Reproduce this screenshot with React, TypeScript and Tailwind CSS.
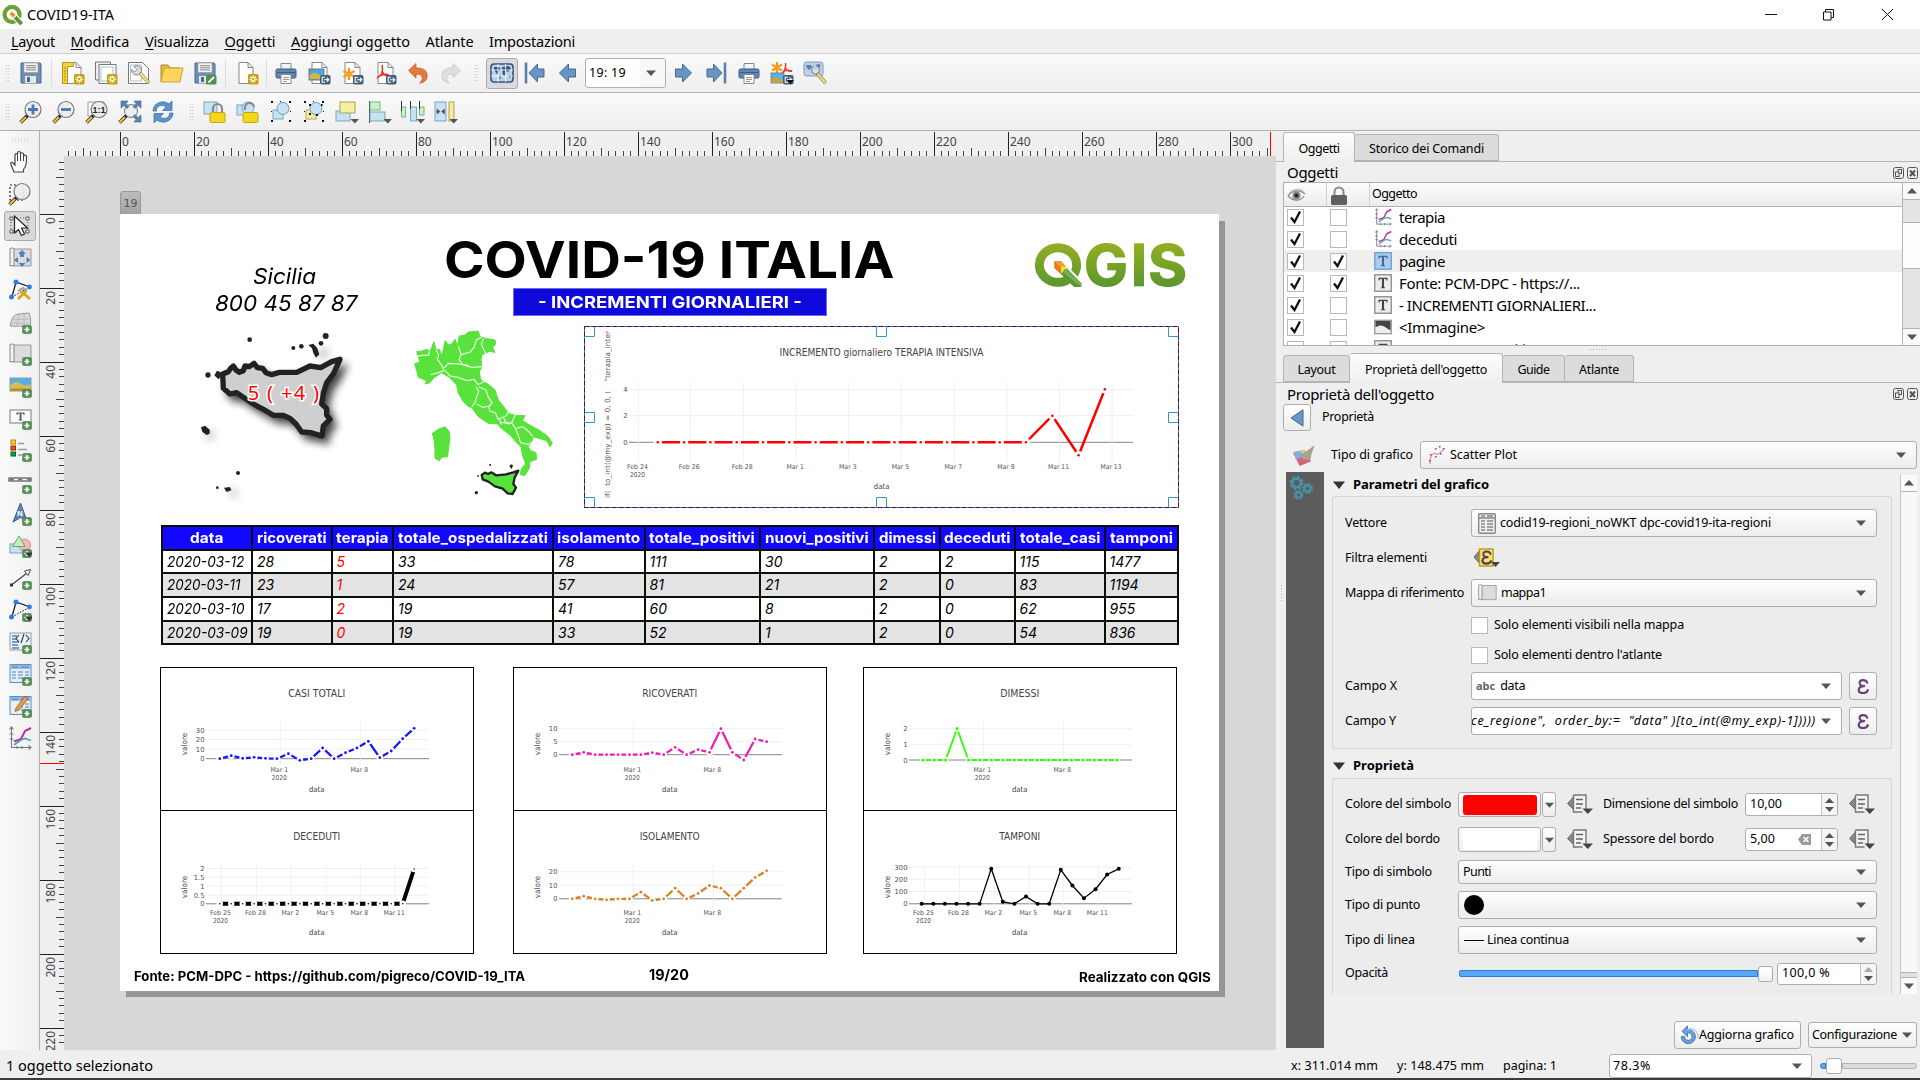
import React, { useLayoutEffect, useRef, useState } from "react";

const UI = "font-['Noto_Sans','Open_Sans',sans-serif]";

/* Text whose tracking is adjusted so that it spans the width w. */
function Fit({ w, className = "", children }: { w: number; className?: string; children: string }) {
  const ref = useRef<HTMLSpanElement>(null);
  const [ls, setLs] = useState(0);
  useLayoutEffect(() => {
    const el = ref.current;
    if (!el) return;
    const old = el.style.letterSpacing;
    el.style.letterSpacing = "0px";
    const nat = el.getBoundingClientRect().width;
    el.style.letterSpacing = old;
    setLs((w - nat) / children.length);
  }, [w, children]);
  return (
    <span ref={ref} className={"inline-block shrink-0 whitespace-pre " + className} style={{ letterSpacing: ls + "px" }}>
      {children}
    </span>
  );
}

/* Text whose glyphs are widened so that it spans the width w. */
function Wide({ w, className = "", children }: { w: number; className?: string; children: string }) {
  const ref = useRef<HTMLSpanElement>(null);
  const [k, setK] = useState(1);
  useLayoutEffect(() => {
    if (ref.current) setK(w / ref.current.offsetWidth);
  }, [w, children]);
  return (
    <span className={"inline-block shrink-0 text-left align-top " + className} style={{ width: w }}>
      <span ref={ref} className="inline-block origin-left whitespace-pre" style={{ transform: `scaleX(${k})` }}>
        {children}
      </span>
    </span>
  );
}

function Ico({ s = 24, children, className = "" }: { s?: number; children: React.ReactNode; className?: string }) {
  return (
    <svg width={s} height={s} viewBox="0 0 24 24" fill="none" className={"shrink-0 " + className}>
      {children}
    </svg>
  );
}

/* ---------- badges ---------- */
const Plus = () => (
  <g>
    <rect x="14.500" y="15.500" width="9" height="8" rx="1.500" fill="#5a9159" stroke="#47784a" strokeWidth=".6" />
    <path d="M19 17v5M16.500 19.500h5" stroke="#fff" strokeWidth="1.600" />
  </g>
);
const PlusMenu = () => (
  <g>
    <Plus />
    <path d="M17 18.500h8l-4 4.500z" fill="#333" />
  </g>
);
const Star = () => (
  <g>
    <rect x="13" y="13" width="10.500" height="10.500" rx="1.500" fill="#c8a10a" />
    <path d="M18.200 14.200v8M14.200 18.200h8M15.500 15.500l5.400 5.400M20.900 15.500l-5.400 5.400" stroke="#fff" strokeWidth="1.100" />
    <circle cx="18.200" cy="18.200" r="1.100" fill="#c8a10a" />
  </g>
);
const Exp = () => (
  <g>
    <rect x="13" y="14" width="10.500" height="9.500" rx="1.800" fill="#41607b" />
    <path d="M18 16.200h-2.800v5H18M17 18.700h4.600M19.800 16.600l2 2.100-2 2.100" stroke="#fff" strokeWidth="1.100" />
  </g>
);
const Down = () => <path d="M15.500 19h8.500l-4.200 4.600z" fill="#555" />;
const Sheet = () => <path d="M5 1.500h10l5 5v16H5z M15 1.500v5h5" fill="#fff" stroke="#888" />;

const Printer = () => (
  <Ico>
    <path d="M7 2.500h10v6H7z" fill="#f4f4f4" stroke="#888" />
    <rect x="2" y="8" width="20" height="9" rx="1.500" fill="#5d88b7" stroke="#3d5d80" />
    <path d="M3 11.500h18" stroke="#3d5d80" />
    <path d="M7 13.500h10v9H7z" fill="#fff" stroke="#888" />
    <path d="M9 16.500h6M9 18.500h6M9 20.500h4" stroke="#999" />
  </Ico>
);
const Arrow = ({ flip = false, bar = false }) => (
  <Ico>
    <g transform={flip ? "translate(24 0) scale(-1 1)" : undefined}>
      <path d={bar ? "M6 12l8.500-9v5h6.500v8h-6.500v5z" : "M3.500 12l9-9v5h7v8h-7v5z"} fill="#6795c5" stroke="#44688f" />
      {bar && <path d="M3 1.500v21" stroke="#5b7fa8" strokeWidth="2.600" />}
    </g>
  </Ico>
);
const Floppy = ({ edit = false }) => (
  <Ico>
    <path d="M2 2h19l1 1v19H2z" fill="#6d8fb4" stroke="#4b6a8c" />
    <rect x="5" y="2" width="14" height="9.500" fill="#f3f3f3" stroke="#8a9aab" strokeWidth=".6" />
    <path d="M7 4.700h10M7 6.800h10M7 8.900h10" stroke="#777" strokeWidth=".9" />
    <rect x="6" y="15" width="11" height="7" fill="#e8e8e8" />
    <rect x="8" y="16" width="3" height="5" fill="#4b6a8c" />
    {edit && <g><rect x="13" y="14" width="10.500" height="9.500" rx="1.500" fill="#4f8f52" /><path d="M15.500 21.500l5.500-5.500" stroke="#fff" strokeWidth="1.800" /></g>}
  </Ico>
);
const Atlas = () => (
  <Ico>
    <rect x="1" y="3" width="22" height="18" rx="3" fill="#b9d2ec" stroke="#34567c" strokeWidth="1.600" />
    <path d="M4 6h5l2 2-3 3v3l-2-2-2-4zM12 6l7-1 2 3-3 3-2-1-1 5-2-1z M9 14l2 1-1 4z M18 14l3 1-1 2z" fill="#34567c" />
    <path d="M8 3v18M15.500 3v18M1 9h22M1 15h22" stroke="#fff" strokeWidth=".8" />
  </Ico>
);
const Lens = ({ kind }: { kind: "in" | "out" | "one" | "sel" | "full" }) => (
  <Ico>
    {kind === "sel" && <path d="M2 3h13v15H2z" stroke="#222" strokeWidth="1.200" strokeDasharray="2 2" />}
    {kind === "one" && <path d="M3 2h16v14H3z" fill="#fff" stroke="#999" />}
    <path d="M8.500 15.500l-7 7" stroke="#222" strokeWidth="3.600" />
    <path d="M7 17l-5.500 5.500" stroke="#f2c43a" strokeWidth="2.200" />
    {kind === "full" ? (
      <g>
        <circle cx="13" cy="11" r="6.500" fill="#eee" stroke="#777" />
        <path d="M3 1h7L8 3.500l3 3-2 2-3-3L3 8zM23 1h-7l2 2.500-3 3 2 2 3-3L23 8zM23 22h-7l2-2.500-3-3 2-2 3 3 3-2.500z" fill="#5885b5" stroke="#3d5f86" strokeWidth=".6" />
      </g>
    ) : (
      <circle cx="14" cy="9.500" r="8" fill="#ececec" fillOpacity=".93" stroke="#777" strokeWidth="1.200" />
    )}
    {kind === "in" && <path d="M14 4.500v10M9 9.500h10" stroke="#4a79ae" strokeWidth="2.800" />}
    {kind === "out" && <path d="M9 9.500h10" stroke="#4a79ae" strokeWidth="2.800" />}
    {kind === "one" && <text x="14" y="13" fontSize="9" fontWeight="700" textAnchor="middle" fill="#222" fontFamily="Liberation Sans">1:1</text>}
  </Ico>
);
const Padlock = ({ open = false }) => (
  <Ico>
    {open ? <g><rect x="1" y="5" width="13" height="10" fill="#c5e3f5" stroke="#7da5bd" /><circle cx="12" cy="8" r="6" fill="#c5e3f5" stroke="#7da5bd" /></g> : <rect x="1" y="2" width="13" height="12" fill="#c5e3f5" stroke="#7da5bd" />}
    <path d={open ? "M9 10V8a4.500 4.500 0 0 1 9-1" : "M10 13V8.500a4.500 4.500 0 0 1 9 0V13"} stroke="#8a8a8a" strokeWidth="2.200" />
    <rect x="7" y="12.500" width="15" height="10" rx="1.500" fill="#f3d71a" stroke="#c3a50d" />
  </Ico>
);
const Handles = () => <path d="M2 1h2v2H2zM20 1h2v2h-2zM2 20h2v2H2zM20 20h2v2h-2zM11 1h1v1h-1zM2 11h1v1H2zM21 11h1v1h-1z" fill="#111" />;
const Group = ({ y = false }) => (
  <Ico>
    <rect x="4" y="10" width="10" height="9" fill={y ? "#f4ee9c" : "#c5e3f5"} stroke={y ? "#b0a95c" : "#7da5bd"} />
    <circle cx="14" cy="8.500" r="6" fill="#c5e3f5" stroke="#6d9bb8" />
    <Handles />
    {y && <path d="M7 4h2v2H7zM19 4h1.500v2H19zM7 13h2v2H7zM14 14h2v2h-2z" fill="#111" />}
  </Ico>
);
const PlotIcon = ({ s = 24 }) => (
  <Ico s={s}>
    <path d="M3.500 1v20.500H23M1.500 3.500l2-2.500 2 2.500M20.500 19.500l2.500 2-2.500 2M1.500 8h4M1.500 13h4M9 20v3M14 20v3" stroke="#777" strokeWidth="1.100" />
    <path d="M6 15.500l7-2.500 4-8 6-3" stroke="#c52d9d" strokeWidth="2" />
    <path d="M6 19l7-5 4-1.500 6 2" stroke="#4ea3b8" strokeWidth="1.700" />
  </Ico>
);
const LabelIcon = ({ blue = false }) => (
  <Ico s={18}>
    <rect x="1" y="1" width="22" height="22" fill={blue ? "#a9cdf0" : "#ededed"} stroke={blue ? "#6f9fc9" : "#8e8e8e"} strokeWidth="1.800" />
    <path d="M6 5h12v3.500h-1.200L16 6.800h-2.600v10.500l1.600.9V19H9v-.8l1.600-.9V6.800H8L7.200 8.500H6z" fill={blue ? "#44688f" : "#444"} />
  </Ico>
);
const MapSheet = ({ s = 24, children }: { s?: number; children?: React.ReactNode }) => (
  <Ico s={s}>
    <path d="M5 3h18v17H5z" fill="#dcdcdc" stroke="#999" />
    <path d="M2 2.500q3-1.500 4 .5v17q-2-1-4 0z" fill="#f2f2f2" stroke="#888" />
    {children}
  </Ico>
);
const NodePoly = () => (
  <g>
    <path d="M4 19L8 4l14 5" stroke="#111" strokeWidth="1.200" />
    <path d="M4 19L22 9" stroke="#111" strokeDasharray="1.500 1.500" />
    <circle cx="8" cy="4" r="2.500" fill="#2b7bf0" />
    <circle cx="21.500" cy="9" r="2.400" fill="#2b7bf0" />
    <circle cx="3.500" cy="19" r="2.500" fill="#2b7bf0" />
  </g>
);
const TableArt = () => (
  <g>
    <rect x="2" y="2.500" width="21" height="18" fill="#e3eef8" stroke="#5b8ec2" />
    <path d="M2 3h21v4H2z" fill="#8fbce6" />
    <path d="M4 5h6M13 5h8M4 10h4M10 10h5M17 10h4M4 13h4M10 13h5M17 13h4M4 16h4M10 16h5M17 16h3" stroke="#4f82b8" strokeWidth="1.200" />
  </g>
);

const TOP1: React.ReactNode[] = [
  <Ico><Sheet /><path d="M1.500 1.500h11v4h-6v17h-5z" fill="#f4d33c" stroke="#b69516" /><path d="M3 7h2M3 10h2M3 13h2M3 16h2M3 19h2" stroke="#8a7010" strokeWidth=".8" /><Star /></Ico>,
  <Ico><path d="M1.500 1h15v18h-15z" fill="#eee" stroke="#777" /><path d="M5 3.500h17v19H5z" fill="#fff" stroke="#777" /><path d="M7 6h12v14H7z" stroke="#a9bfe0" /><Star /></Ico>,
  <Ico><path d="M1.500 1.500h14l6 6v15h-20z" fill="#fff" stroke="#777" /><path d="M3.500 4h11v16h-11z" stroke="#a9bfe0" /><path d="M13 12l9 10" stroke="#b29c45" strokeWidth="3.600" /><path d="M13 12l8.500 9.500" stroke="#f1dd92" strokeWidth="2" /><path d="M7 5.500l3 3-2.500 2.500-3-2.500a5 5 0 0 0 7 5l3-3a5 5 0 0 0-5.500-6z" fill="#ddd" stroke="#888" /></Ico>,
  <Ico><path d="M1 21V4h7l2 3h10v3" fill="#e7b93b" stroke="#b08c2c" /><path d="M1 21L4 7h19l-3 14z" fill="#fbd65d" stroke="#c9a33a" /></Ico>,
  <Floppy edit />,
];
const TOP3: React.ReactNode[] = [
  <Printer />,
  <Ico><Sheet /><rect x="2" y="8" width="15" height="11" fill="#4da6e8" stroke="#777" /><path d="M2.500 18v-4l5-2.500 9 4V18z" fill="#d9b445" /><Exp /></Ico>,
  <Ico><Sheet /><path d="M9 7v12M3.500 10l11 6M14.500 10l-11 6" stroke="#f59b1e" strokeWidth="2.400" /><Exp /></Ico>,
  <Ico><Sheet /><path d="M4 17c6-3 6-9 5-13M9 10c2 4 5 6 8 5M4 17c4-4 9-4 12-3" stroke="#e5332a" strokeWidth="1.600" /><Exp /></Ico>,
  <Ico><path d="M2.500 9.500L10 2.500v4.500c8-.5 12 3.500 11 9.500-.6 3.500-4 5.500-7.500 5.500 4-3 4.500-9-3.500-9v4z" fill="#e37c38" stroke="#bd6226" strokeWidth=".8" /></Ico>,
  <Ico><path d="M21.500 9.500L14 2.500v4.500c-8-.5-12 3.500-11 9.500.6 3.500 4 5.500 7.500 5.500-4-3-4.500-9 3.500-9v4z" fill="#dcdfdc" stroke="#c5c8c5" strokeWidth=".8" /></Ico>,
];
const BAR2A: React.ReactNode[] = [
  <Lens kind="in" />,
  <Lens kind="out" />,
  <Lens kind="one" />,
  <Lens kind="full" />,
  <Ico>
    <path d="M2 11C2 3 12-1 18 4l3-3v9.500h-9.500L15 7C11 4 5 6 5.500 11z" fill="#5d93cd" stroke="#3c6ba0" strokeWidth=".7" />
    <path d="M22 13c0 8-10 12-16 7l-3 3v-9.500h9.500L9 17c4 3 10 1 9.500-4z" fill="#5d93cd" stroke="#3c6ba0" strokeWidth=".7" />
  </Ico>,
];
const BAR2B: React.ReactNode[] = [
  <Padlock />,
  <Padlock open />,
  <Group />,
  <Group y />,
  <Ico><rect x="1" y="11" width="14" height="10" fill="#c5e3f5" stroke="#7da5bd" /><rect x="5" y="2" width="15" height="11" fill="#f6f0a0" stroke="#a8a25f" /><Down /></Ico>,
  <Ico><path d="M1.500 1v22" stroke="#333" /><rect x="2" y="2" width="10" height="8" fill="#c9f2cb" stroke="#79b67c" /><rect x="2" y="12" width="15" height="9" fill="#c5e3f5" stroke="#7da5bd" /><Down /></Ico>,
  <Ico><rect x="0.500" y="7" width="4" height="10" fill="#c9f2cb" stroke="#79b67c" /><rect x="9.500" y="7" width="6" height="14" fill="#c5e3f5" stroke="#7da5bd" /><rect x="18.500" y="7" width="4.500" height="8" fill="#c9f2cb" stroke="#79b67c" /><path d="M.500 1v10M9.500 1v8M18.500 1v8" stroke="#333" /><Down /></Ico>,
  <Ico><rect x="1" y="2" width="11" height="19" fill="#c5e3f5" stroke="#7da5bd" /><rect x="15" y="2" width="5" height="19" fill="#f4ee9c" stroke="#a8a25f" /><path d="M2 11.500h3M11 11.500H8M3 9l3 2.500L3 14zM10.500 9l-3 2.500 3 2.500z" fill="#555" stroke="#555" strokeWidth=".6" /><Down /></Ico>,
];
const LEFT: React.ReactNode[] = [
  <Ico><path d="M6 22L3 14.500C2 12 4 11.500 5.500 13.500L7 15V5c0-2 2.500-2 2.500 0v-2c0-2 3-2 3 0v1c0-1.700 3-1.700 3 0v2c.5-1.500 3-1.200 3 .5 0 6 0 9-3 13v2.500z" fill="#fff" stroke="#444" strokeWidth="1.200" /><path d="M9.500 5v6M12.500 4v7M15.500 6v5" stroke="#444" /></Ico>,
  <Lens kind="sel" />,
  <Ico><path d="M3 4h17v14H3z" stroke="#555" strokeDasharray="1 2" /><path d="M2 3h3v3H2zM18 3h3v3h-3zM2 16h3v3H2zM18 16h3v3h-3z" fill="#fff" stroke="#555" /><path d="M6.500 2v17l4-3.500 3 6 3-1.500-3-6h6z" fill="#fff" stroke="#222" strokeWidth="1.200" /></Ico>,
  <MapSheet><path d="M14 4l4 4h-2v3h-4V8h-2zM6 14l4-3v6zM22.500 14l-4-3v6zM14 21l-3.500-4h7z" fill="#4f82b8" /></MapSheet>,
  <Ico><NodePoly /><path d="M10 21l8-8M13 13l9 8" stroke="#d9a520" strokeWidth="3" /><path d="M10 13l5-3 4 3" stroke="#999" strokeWidth="2" /></Ico>,
  <Ico><path d="M2 16C3 9 6 4 11 4l10-1c2 5 2 8 1 14-8-2-12 0-20-1z" fill="#d8d8d8" stroke="#999" /><path d="M5 10l16-1M3 13l19 1M11 4L9 16M16 4v13" stroke="#b5b5b5" strokeWidth=".8" /><Plus /></Ico>,
  <MapSheet><Plus /></MapSheet>,
  <Ico><rect x="2" y="4" width="21" height="13" fill="#4fb0ef" stroke="#999" /><path d="M2.500 16.500v-6l6-3 8 4 6-1v6z" fill="#d8bb5a" /><path d="M2.500 17v-2.500h20V17z" fill="#b3912e" /><Plus /></Ico>,
  <Ico><rect x="2" y="4" width="21" height="13" fill="#fbfbfb" stroke="#8e8e8e" strokeWidth="1.200" /><path d="M8.500 6.500h8V9h-.8l-.6-1.400h-1.700v5.800l1 .6v.5h-3.800V14l1-.6V7.600H9.900L9.300 9h-.8z" fill="#555" /><Plus /></Ico>,
  <Ico><rect x="3" y="2" width="4.500" height="4" fill="#ffd21c" stroke="#b88c00" /><rect x="3" y="8" width="4.500" height="4" fill="#f24d12" stroke="#992b00" /><rect x="3" y="14" width="4.500" height="4" fill="#12a04a" stroke="#05642a" /><path d="M10 5.500h6M10 11.500h9M10 17h4" stroke="#999" strokeWidth="1.600" /><Plus /></Ico>,
  <Ico><rect x="1" y="8" width="22" height="3" fill="#fff" stroke="#333" /><path d="M2 9.500h4M10 9.500h4.500M19 9.500h3.500" stroke="#777" strokeWidth="2" /><Plus /></Ico>,
  <Ico><path d="M12.500 1L19 19l-6.500-3.500L5 20z" fill="#5d88b7" stroke="#35597f" /><text x="9" y="14" fontSize="8" fontWeight="700" fill="#fff" fontFamily="Liberation Sans">N</text><Plus /></Ico>,
  <Ico><rect x="2" y="10" width="13" height="9" fill="#c5e3f5" stroke="#6ba5cf" /><circle cx="16.500" cy="11" r="6" fill="#f7b7b7" stroke="#e08a8a" /><path d="M11 2l6 10.500H4.500z" fill="#bff0bf" stroke="#5fae62" /><PlusMenu /></Ico>,
  <Ico><path d="M3.500 19L19 7" stroke="#444" strokeWidth="1.200" /><path d="M2 17.500h3v3H2z" fill="#333" /><path d="M16.500 5l6-1.500L20 9.500z" fill="#fff" stroke="#444" /><Plus /></Ico>,
  <Ico><NodePoly /><PlusMenu /></Ico>,
  <Ico><rect x="2" y="3" width="21" height="17" fill="#eaf1f8" stroke="#999" /><path d="M4 6h5M4 9h4M4 12h7M4 15h6M4 18h7" stroke="#4f82b8" strokeWidth="1.300" /><path d="M11 5l-3 3.500 3 3.500M18 5l3 3.500-3 3.500M16 4l-3 9" stroke="#333" strokeWidth="1.100" /><Plus /></Ico>,
  <Ico><TableArt /><Plus /></Ico>,
  <Ico><TableArt /><path d="M3 8h10v11H3z" fill="#eee" /><path d="M8 14l9-12 3 2.500-9 11.500-4 1.500z" fill="#e59a4c" stroke="#8d5a24" strokeWidth=".8" /><Plus /></Ico>,
  <PlotIcon />,
];

const Slot = ({ children, className = "w-[33px]" }: { children?: React.ReactNode; className?: string }) => (
  <div className={"flex h-full shrink-0 items-center justify-center " + className}>{children}</div>
);
const Sep = ({ className = "w-[9px]" }) => (
  <div className={"flex h-full shrink-0 items-center justify-center " + className}><div className="h-[28px] w-px bg-[#dcdcdc]" /></div>
);
const Grip = ({ className = "" }) => (
  <div className={"flex h-full shrink-0 items-center justify-center " + className}>
    <div className="h-[18px] w-[5px] bg-[radial-gradient(circle,#b9b9b9_0.7px,transparent_0.8px)] bg-[length:2.5px_3px]" />
  </div>
);
const Tri = ({ className = "" }) => (
  <svg width="10" height="6" viewBox="0 0 10 6" className={"shrink-0 " + className}><path d="M0 .5h10L5 6z" fill="#555" /></svg>
);

/* ---------- rulers ---------- */
const MM = 3.7;
function HRuler() {
  const t: React.ReactNode[] = [];
  for (let mm = -14; mm <= 310; mm += 2) {
    const x = Math.floor(56 + mm * MM) + 0.5;
    const y = mm % 20 === 0 ? 1 : mm % 10 === 0 ? 17 : 20;
    t.push(<path key={mm} d={`M${x} ${y}V25`} stroke={mm % 20 === 0 ? "#222" : "#444"} />);
    if (mm % 20 === 0 && mm >= 0) t.push(<text key={"t" + mm} x={x + 1.500} y="14.500" fontSize="12" fill="#444">{mm}</text>);
  }
  return <svg width="1212" height="25" className="block shrink-0 bg-[#efefef] font-['Noto_Sans',sans-serif]">{t}<path d="M1206.500 1V25" stroke="#f00" /></svg>;
}
function VRuler() {
  const t: React.ReactNode[] = [];
  for (let mm = -14; mm <= 226; mm += 2) {
    const y = Math.floor(58 + mm * MM) + 0.5;
    const x = mm % 20 === 0 ? 0 : mm % 10 === 0 ? 16 : 19;
    t.push(<path key={mm} d={`M${x} ${y}H24`} stroke={mm % 20 === 0 ? "#222" : "#444"} />);
    if (mm % 20 === 0 && mm >= 0) t.push(<text key={"t" + mm} transform={`translate(14.500 ${y + 2.500}) rotate(-90)`} textAnchor="end" fontSize="12" fill="#444">{mm}</text>);
  }
  return <svg width="24" height="894" className="block shrink-0 bg-[#efefef] font-['Noto_Sans',sans-serif]">{t}<path d="M0 607.500H24" stroke="#f00" /></svg>;
}

/* ---------- charts ---------- */
type Tick = [number, string];
interface ChartProps {
  w: number; h: number; title: string; tw: number; color: string;
  x0: number; dx: number; ys: number[]; yt: Tick[]; xt: Tick[];
  left?: number; right?: number; top?: number; bottom?: number;
  line?: number; dot?: number; halo?: number; xl?: number; xl2?: number; dl?: number;
  cx?: number; wide?: boolean; frame?: string; origin?: number;
}
function Chart(p: ChartProps) {
  const { left = 46, right = 269, top = 55.500, bottom = 98, line = 2.200, dot = 1.400, halo = 3.400, xl = 104.700, xl2 = 112.500, dl = 124.500, cx = 156.700, origin = 0 } = p;
  const zero = "0";
  const pts = p.ys.map((y, i) => [p.x0 + i * p.dx, y] as const);
  return (
    <svg width={p.w} height={p.h} viewBox={`${origin} ${origin} ${p.w} ${p.h}`} className={"block font-['DejaVu_Sans',sans-serif] " + (p.frame ?? "")}>
      {p.yt.map(([y, s]) => (
        <g key={s}>
          <path d={`M${left} ${y}H${right}`} stroke={s === zero ? "#777" : "#eee"} strokeWidth=".9" />
          <text x={left - 1.500} y={y + 2.600} textAnchor="end" fontSize="6.800" fill="#555">{s}</text>
        </g>
      ))}
      {p.xt.map(([x, s], i) => (
        <g key={s} textAnchor="middle" fontSize="6.600" fill="#555">
          <path d={`M${x} ${top}V${bottom}`} stroke="#eee" strokeWidth=".9" />
          <text x={x - 1} y={xl} textLength={s.length * 3.500} lengthAdjust="spacingAndGlyphs">{s}</text>
          {i === 0 && <text x={x - 1} y={xl2} textLength="15" lengthAdjust="spacingAndGlyphs">2020</text>}
        </g>
      ))}
      <polyline points={pts.map((q) => q.join(",")).join(" ")} fill="none" stroke={p.color} strokeWidth={line} />
      {pts.map((q, i) => (
        <g key={i}>
          {halo > 0 && <circle cx={q[0]} cy={q[1]} r={halo} fill="#fff" />}
          <circle cx={q[0]} cy={q[1]} r={dot} fill={p.color} />
        </g>
      ))}
      <text x={cx} y="29.700" textAnchor="middle" fontSize="9.800" fill="#444" textLength={p.tw} lengthAdjust="spacingAndGlyphs">{p.title}</text>
      <text x={cx} y={dl} textAnchor="middle" fontSize="7.800" fill="#444" textLength="15.500" lengthAdjust="spacingAndGlyphs">data</text>
      {p.wide ? (
        <text transform="translate(26 172) rotate(-90)" fontSize="7.200" fill="#555" textLength="167" lengthAdjust="spacingAndGlyphs" className="whitespace-pre">{'if(  to_int(@my_exp) = 0, 0, (    "terapia_inter'}</text>
      ) : (
        <text transform="translate(26.500 77) rotate(-90)" textAnchor="middle" fontSize="7.800" fill="#444" textLength="22.500" lengthAdjust="spacingAndGlyphs">valore</text>
      )}
    </svg>
  );
}
const M2: Tick[] = [[120.300, "Mar 1"], [200.300, "Mar 8"]];
const M6: Tick[] = [[61.500, "Feb 25"], [96.500, "Feb 28"], [131.300, "Mar 2"], [166.300, "Mar 5"], [200.300, "Mar 8"], [235.300, "Mar 11"]];
const up = (z: number) => z / 3 - 7;
const lo = (z: number) => z / 3 - 150.500;
const lo5 = (z: number) => z / 3 - 149.500;
const box = { w: 312, h: 142, x0: 59.800, dx: 11.430, origin: 1 };

function Column({ children, className }: { children: React.ReactNode; className: string }) {
  return <div className={"absolute flex w-[314px] flex-col border border-black " + className}>{children}</div>;
}

/* ---------- table ---------- */
const COLS: [string, number, number][] = [
  ["data", 90.500, 33], ["ricoverati", 79.500, 70], ["terapia", 61.500, 52], ["totale_ospedalizzati", 160, 150], ["isolamento", 91.500, 83],
  ["totale_positivi", 115.500, 106], ["nuovi_positivi", 114, 104], ["dimessi", 66, 57], ["deceduti", 74.500, 66], ["totale_casi", 90, 80], ["tamponi", 73, 63],
];
const ROWS = [
  ["2020-03-12", "28", "5", "33", "78", "111", "30", "2", "2", "115", "1477"],
  ["2020-03-11", "23", "1", "24", "57", "81", "21", "2", "0", "83", "1194"],
  ["2020-03-10", "17", "2", "19", "41", "60", "8", "2", "0", "62", "955"],
  ["2020-03-09", "19", "0", "19", "33", "52", "1", "2", "0", "54", "836"],
];
const ROWW: number[] = [77, 74, 78, 81];

const SICILY = "M308 462L325 455 332 445 340 438 348 450 358 457 370 452 375 438 388 440 402 430 412 443 428 445 438 458 455 464 478 457 530 457 570 438 602 443 635 425 660 418 640 462 620 488 610 520 605 552 620 566 620 585 630 598 610 618 606 648 572 638 545 636 528 612 510 595 490 586 460 586 430 568 400 552 375 535 350 518 330 522 310 505z";
const SIC2 = "M1085 765L1095 758 1104 762 1114 757 1128 766 1158 763 1180 757 1195 752 1184 772 1180 792 1188 803 1178 822 1163 820 1148 806 1125 799 1105 785 1088 778z";
const ITALY = "M890 395L905 393 920 388 930 394 937 378 942 365 948 390 958 388 966 408 975 362 985 375 995 372 1005 358 1012 378 1018 348 1035 345 1045 336 1075 333 1080 350 1095 355 1125 360 1127 372 1118 382 1125 397 1108 394 1085 405 1083 420 1086 440 1078 455 1082 480 1105 493 1125 510 1135 540 1150 558 1165 580 1185 586 1215 587 1208 602 1230 616 1260 632 1285 650 1297 670 1290 680 1280 662 1260 656 1240 650 1235 665 1225 680 1232 692 1248 698 1250 718 1230 725 1228 745 1214 767 1200 763 1205 745 1217 732 1208 708 1203 680 1190 668 1170 645 1140 622 1135 612 1105 610 1075 590 1055 562 1045 560 1030 545 1015 520 1010 495 988 472 965 458 940 475 930 488 915 492 920 482 895 472 890 452 884 432 900 425z";

function Maps() {
  return (
    <svg width="480" height="290" viewBox="0 0 1440 870" className="absolute left-0 top-[6px]">
      <defs>
        <filter id="sh" x="-20%" y="-20%" width="150%" height="150%"><feGaussianBlur stdDeviation="13" /></filter>
      </defs>
      <path d={SICILY} transform="translate(16 20)" fill="#000" stroke="#000" strokeWidth="10" opacity=".75" filter="url(#sh)" />
      <g fill="#000" opacity=".25" filter="url(#sh)"><circle cx="270" cy="645" r="14" /><circle cx="340" cy="820" r="12" /><circle cx="610" cy="400" r="16" /></g>
      <path d={SICILY} fill="#cfcfcf" stroke="#222" strokeWidth="16" strokeLinejoin="round" />
      <g fill="#222">
        <circle cx="389" cy="359" r="7" /><circle cx="520" cy="384" r="6" /><circle cx="544" cy="379" r="7" /><circle cx="603" cy="370" r="7" /><circle cx="617" cy="348" r="9" />
        <path d="M565 375l15-4 12 14 6 18-10 10-8-14-4-14z" />
        <circle cx="264" cy="465" r="8" /><path d="M283 466l8-14 10 4 6 10-12 12z" />
        <path d="M243 622l12-5 14 12 0 12-10 4-12-10z" /><circle cx="354" cy="759" r="6" /><circle cx="292" cy="803" r="4" /><path d="M312 803l18-2 4 10-14 5z" />
        <circle cx="1069" cy="818" r="5" /><path d="M1168 738l5-5 6 3-4 12z" /><path d="M1108 732h5v5h-5zM1072 766h5v4h-5z" />
      </g>
      <text x="383" y="541" fontSize="60" fill="#f00" stroke="#fff" strokeWidth="9" paintOrder="stroke" textLength="214" lengthAdjust="spacing" fontFamily="Noto Sans">5 ( +4 )</text>
      <path d={ITALY} fill="#59e23c" stroke="#59e23c" strokeWidth="3" strokeLinejoin="round" />
      <path d="M937 640L955 628 975 620 988 635 990 655 985 690 983 710 965 712 958 722 945 715 945 690 942 660z" fill="#59e23c" stroke="#59e23c" strokeWidth="3" strokeLinejoin="round" />
      <path d="M888 410l18-4 20 0 2-12M948 390l8 14-4 14 12 16 8 18-16 6-24 6M1015 378l8 26-6 16 14 16 26 6 30-2M972 444l14-14 30 2 30 4M1023 404l28-8 12-16 6-20 16-8M1090 356l-6 18 14 28M976 452l14 16 24 4 26 10 22-4 12 16 20-10M1068 500l8 14 -6 16-4 16-10 14M1076 500l22 10 6 20 12 18-6 10-22 4-18-10M1118 546l-12 14 4 14 16 4 8 20 24-10 6-10M1138 598l6 16M1150 590l6 16 18 4 12-26M1174 606l12 20 22-6M1186 626l8 18 8 24 24 6 6-8M1208 620l20 16 10 14M1140 606l30 6" fill="none" stroke="#e9fbe4" strokeWidth="3.500" />
      <path d={SIC2} fill="#59e23c" stroke="#222" strokeWidth="7" strokeLinejoin="round" />
    </svg>
  );
}

function QgisLogo() {
  return (
    <svg width="160" height="56" viewBox="0 0 480 168" className="absolute left-[912px] top-[24px] overflow-visible font-['Inter',sans-serif]">
      <defs>
        <linearGradient id="qg" x1="0" y1="16" x2="0" y2="146" gradientUnits="userSpaceOnUse">
          <stop offset="0" stopColor="#94af22" /><stop offset="1" stopColor="#5a962f" />
        </linearGradient>
      </defs>
      <ellipse cx="78" cy="81" rx="56" ry="52" fill="none" stroke="url(#qg)" strokeWidth="27" />
      <path d="M66 70h26l70 72v8h-32z" fill="#fff" />
      <path d="M68 70h16l64 66v11h-22L68 90z" fill="#5b9733" />
      <path d="M84 96l10-10 54 50v11z" fill="#76ad55" />
      <path d="M84 85l8-10 18 18H98l-10 15z" fill="#f6df3a" />
      <path d="M67 70h21l12 15H86v22L67 90z" fill="#ee7913" />
      <path d="M67 70h21l12 15H82z" fill="#f39a45" />
      <g fill="url(#qg)" fontWeight="800" fontSize="174">
        <text x="155" y="143.500" textLength="134" lengthAdjust="spacingAndGlyphs">G</text>
        <path d="M306 16h30v129h-30z" />
        <text x="347" y="143.500" textLength="119" lengthAdjust="spacingAndGlyphs">S</text>
      </g>
    </svg>
  );
}

const MON = "font-['Inter',sans-serif]";

function Canvas() {
  return (
    <div className="relative h-[894px] w-[1212px] shrink-0 overflow-hidden bg-[#d7d7d7]">
      <div className="absolute left-[56px] top-[35px] flex h-[24px] w-[21px] items-center justify-center rounded-t-[3px] border border-[#999] bg-linear-to-b from-[#bdbdbd] to-[#a2a2a2] pt-[2px] font-['DejaVu_Sans',sans-serif] text-[11px] text-[#555]">19</div>
      <div className="absolute left-[62px] top-[65px] h-[776px] w-[1099px] bg-[#969696]" />
      <div className="absolute left-[56px] top-[58px] h-[777px] w-[1099px] bg-white text-black">
        <Maps />
        <div className={"absolute left-[133px] top-[49px] leading-[27px] text-[21.500px] italic " + MON}><Wide w={63}>Sicilia</Wide></div>
        <div className={"absolute left-[95px] top-[76px] leading-[27px] text-[21.500px] italic " + MON}><Wide w={142}>800 45 87 87</Wide></div>
        <div className={"absolute left-[324px] top-[15px] leading-[62px] text-[51px] font-bold " + MON}><Wide w={450}>COVID-19 ITALIA</Wide></div>
        <div className={"absolute left-[393px] top-[74px] flex h-[28px] w-[314px] items-center justify-center border border-[#6b69ee] bg-[#0d0adb] text-[16.500px] font-bold text-white " + MON}><Wide w={264}>- INCREMENTI GIORNALIERI -</Wide></div>
        <QgisLogo />

        <div className="absolute left-[464px] top-[112px] h-[182px] w-[595px]">
          <Chart w={595} h={182} wide title="INCREMENTO giornaliero TERAPIA INTENSIVA" tw={204} color="#f00" cx={297.600} x0={73.800} dx={26.300}
            ys={[...Array(15).fill(116.300), 89.700, 129.300, 63.300]} line={2.500} halo={4.200} dot={1.300}
            yt={[[116.300, "0"], [89.700, "2"], [63.700, "4"]]}
            xt={[[54.400, "Feb 24"], [106.200, "Feb 26"], [159.200, "Feb 28"], [212.200, "Mar 1"], [264.800, "Mar 3"], [317.400, "Mar 5"], [370.300, "Mar 7"], [423, "Mar 9"], [475.500, "Mar 11"], [528, "Mar 13"]]}
            left={45} right={549} top={56.300} bottom={136.700} xl={142.700} xl2={150.700} dl={162.700} />
          <svg width="595" height="182" className="absolute left-0 top-0" fill="none">
            <rect x=".5" y=".5" width="594" height="181" stroke="#3a93c8" />
            <rect x=".5" y=".5" width="594" height="181" stroke="#5a0a3c" strokeDasharray="5 2" />
            <path d="M.5 10.500h10V.5M292.500 0v10.500h10V0M594.500 10.500h-10V.5M.5 86.500h10v10H0M594.500 86.500h-10v10h10M.5 171.500h10v10M292.500 181.500v-10h10v10M594.500 171.500h-10v10" stroke="#3a93c8" />
          </svg>
        </div>

        <table className={"absolute left-[40.500px] top-[311px] table-fixed border-collapse " + MON}>
          <colgroup>{COLS.map((c) => <col key={c[0]} style={{ width: c[1] }} />)}</colgroup>
          <thead>
            <tr className="h-[23.700px] bg-[#1207ff] text-[14.500px] font-bold text-white">
              {COLS.map((c) => <th key={c[0]} className="overflow-hidden border-2 border-[#0a0f0a] p-0 leading-[20px]"><Wide w={c[2]}>{c[0]}</Wide></th>)}
            </tr>
          </thead>
          <tbody>
            {ROWS.map((r, i) => (
              <tr key={i} className={"h-[23.700px] text-[14px] italic " + (i % 2 ? "bg-[#e3e3e3]" : "bg-white")}>
                {r.map((c, j) => (
                  <td key={j} className={"overflow-hidden border-2 border-[#0a0f0a] py-0 pl-[4px] pr-0 text-left leading-[20px] " + (j === 2 ? "text-[#f00]" : "")}>
                    {j === 0 ? <Wide w={ROWW[i]}>{c}</Wide> : c}
                  </td>
                ))}
              </tr>
            ))}
          </tbody>
        </table>

        <Column className="left-[40px] top-[453px]">
          <Chart {...box} title="CASI TOTALI" tw={57} color="#1414ff" ys={[296, 287, 295, 292, 295, 296, 281, 301, 296, 264, 296, 278, 264, 244, 293, 273, 236, 205].map(up)}
            yt={[[91.700, "0"], [82, "10"], [72.400, "20"], [63, "30"]]} xt={M2} frame="border-b border-black box-content" />
          <Chart {...box} title="DECEDUTI" tw={47} color="#000" line={4} dot={0.800} halo={3.200} ys={[...Array(17).fill(93.800), 59]}
            yt={[[93.800, "0"], [85.200, "0.5"], [76.200, "1"], [67.200, "1.5"], [58.500, "2"]]} xt={M6} />
        </Column>
        <Column className="left-[393px] top-[453px]">
          <Chart {...box} x0={59.300} title="RICOVERATI" tw={55} color="#f01ab4" ys={[284, 277, 284, 284, 284, 284, 284, 278, 284, 262, 284, 269, 277, 206, 277, 300, 237, 245].map(up)}
            yt={[[87.700, "0"], [74.700, "5"], [61.700, "10"]]} xt={M2} frame="border-b border-black box-content" />
          <Chart {...box} x0={59.300} title="ISOLAMENTO" tw={60} color="#d9821f" ys={[715, 707, 715, 718, 715, 715, 695, 720, 715, 683, 715, 699, 675, 683, 715, 683, 651, 631].map(lo5)}
            yt={[[88.800, "0"], [75.200, "10"], [61.800, "20"]]} xt={M2} />
        </Column>
        <Column className="left-[743px] top-[453px]">
          <Chart {...box} title="DIMESSI" tw={39} color="#2dff0a" line={1.800} dot={1.600} halo={3} ys={[93, 93, 93, 61.700, ...Array(14).fill(93)]}
            yt={[[93, "0"], [77.300, "1"], [61.700, "2"]]} xt={M2} frame="border-b border-black box-content" />
          <Chart {...box} x0={58.700} dx={11.590} title="TAMPONI" tw={41} color="#000" line={1.300} dot={2} halo={0} ys={[733, 733, 733, 733, 733, 733, 628, 727, 733, 711, 733, 733, 631, 678, 716, 689, 645, 628].map(lo)}
            yt={[[93.800, "0"], [81.500, "100"], [69.200, "200"], [57.200, "300"]]} xt={M6} />
        </Column>

        <div className={"absolute left-[13.500px] top-[751.500px] leading-[20px] text-[13px] font-bold " + MON}><Wide w={391}>Fonte: PCM-DPC - https://github.com/pigreco/COVID-19_ITA</Wide></div>
        <div className={"absolute left-[529px] top-[751px] leading-[20px] text-[14px] font-bold " + MON}><Wide w={40}>19/20</Wide></div>
        <div className={"absolute left-[958.500px] top-[752.500px] leading-[20px] text-[13px] font-bold " + MON}><Wide w={132}>Realizzato con QGIS</Wide></div>
      </div>
    </div>
  );
}

/* ---------- right dock ---------- */
const btn = "flex shrink-0 items-center rounded-[3px] border border-[#aeaeae] bg-linear-to-b from-[#fefefe] to-[#ededed]";

function Tab({ label, w, active = false, className }: { label: string; w: number; active?: boolean; className: string }) {
  return (
    <div className={"flex shrink-0 items-center justify-center rounded-t-[3px] border border-[#b4b4b4] text-[12.500px] " + (active ? "-mb-px h-[30px] border-b-0 bg-linear-to-b from-[#fdfdfd] to-[#efefef] pt-[3px] " : "h-[27px] border-l-0 bg-[#dcdcdc] pt-[4px] ") + className}>
      <Fit w={w}>{label}</Fit>
    </div>
  );
}
function DockTitle({ label, w }: { label: string; w: number }) {
  return (
    <div className="flex h-full items-center pl-[11px] pr-[2px] pt-px">
      <Fit w={w} className="mr-auto text-[15px]">{label}</Fit>
      <svg width="11" height="12" viewBox="0 0 11 12" fill="none" stroke="#555" className="mr-[3px]"><rect x=".5" y=".5" width="10" height="11" rx="2" /><rect x="5" y="2.500" width="3.500" height="4" /><rect x="2.500" y="5" width="3.500" height="4.500" fill="#efefef" /></svg>
      <svg width="11" height="12" viewBox="0 0 11 12" fill="none" stroke="#555"><rect x=".5" y=".5" width="10" height="11" rx="2" /><path d="M3 3.500l5 5.500M8 3.500L3 9" strokeWidth="2" /></svg>
    </div>
  );
}
function Check({ on = false }) {
  return (
    <div className="flex size-[17px] shrink-0 items-center justify-center border border-[#b9b9b9] bg-white">
      {on && <svg width="13" height="14" viewBox="0 0 13 14"><path d="M2 7.500l3.500 4.500L11 1.500" fill="none" stroke="#111" strokeWidth="2.300" /></svg>}
    </div>
  );
}
function ScrollBtn({ up: u = false, className }: { up?: boolean; className: string }) {
  return (
    <div className={"flex shrink-0 items-center justify-center border-[#b4b4b4] bg-[#fafafa] " + className}>
      <Tri className={u ? "rotate-180" : ""} />
    </div>
  );
}
const TREE: [string, number, boolean, React.ReactNode][] = [
  ["terapia", 46, false, <PlotIcon s={18} />],
  ["deceduti", 58, false, <PlotIcon s={18} />],
  ["pagine", 46, true, <LabelIcon blue />],
  ["Fonte: PCM-DPC - https://...", 181, true, <LabelIcon />],
  ["- INCREMENTI GIORNALIERI...", 197, false, <LabelIcon />],
  ["<Immagine>", 86, false, <Ico s={18}><rect x="1" y="3" width="22" height="18" fill="#eee" stroke="#888" strokeWidth="1.500" /><path d="M2 4h20v12c-4 0-7-6-13-6-3 0-5 2-7 2z" fill="#444" /></Ico>],
  ['[% "REN. SPECIAL" || ...', 140, false, <LabelIcon />],
];
const Combo = ({ children, className }: { children: React.ReactNode; className: string }) => (
  <div className={btn + " text-[12.500px] " + className}>{children}<Tri className="ml-auto mr-[10px]" /></div>
);
const Lab = ({ w, children, className = "" }: { w: number; children: string; className?: string }) => (
  <div className={"shrink-0 text-[12.500px] " + className}><Fit w={w}>{children}</Fit></div>
);
const Override = ({ className = "" }) => (
  <svg width="26" height="21" viewBox="0 0 26 21" fill="none" className={"shrink-0 " + className}>
    <path d="M6.500 3L.5 9.500l6 6z" fill="#888" stroke="#666" />
    <path d="M6.500 1h12.500v14M6.500 1v17h9" stroke="#777" strokeWidth="1.400" fill="#f4f4f4" />
    <path d="M9 5.500h7M9 10h7M9 14h5" stroke="#666" strokeWidth="1.400" />
    <path d="M15.500 14.500H26L20.800 20z" fill="#444" />
  </svg>
);
const Spin = ({ text, w, className, clear = false, dim = false }: { text: string; w: number; className: string; clear?: boolean; dim?: boolean }) => (
  <div className={"flex shrink-0 items-stretch rounded-[3px] border border-[#aeaeae] bg-white text-[12.500px] " + className}>
    <div className="flex flex-1 items-center pl-[4px]">
      <Fit w={w}>{text}</Fit>
      {clear && <svg width="13" height="11" viewBox="0 0 13 11" className="ml-auto mr-[10px]"><path d="M4 0h9v11H4L0 5.500z" fill="#9a9a9a" /><path d="M5.500 3l5 5M10.500 3l-5 5" stroke="#fff" strokeWidth="1.500" /></svg>}
    </div>
    <div className="flex w-[16px] flex-col items-center justify-center gap-[4px] rounded-r-[3px] border-l border-[#c4c4c4] bg-[#f5f5f5]">
      <svg width="9" height="5" viewBox="0 0 9 5"><path d="M0 5h9L4.500 0z" fill={dim ? "#aaa" : "#555"} /></svg>
      <svg width="9" height="5" viewBox="0 0 9 5"><path d="M0 0h9L4.500 5z" fill="#555" /></svg>
    </div>
  </div>
);
/* Expression symbol, drawn in a 10 x 14 area. */
const EpsMark = ({ color }: { color: string }) => (
  <g fill="none" stroke={color} strokeLinecap="round">
    <path d="M9 3.500C8 .2 1.800 .2 1.800 3.600 1.800 5.800 4 6.600 6 6.600" strokeWidth="1.900" />
    <path d="M6 6.600C3.500 6.600 1 7.600 1 10.200 1 14 8.500 14 9.500 10.500" strokeWidth="2.100" />
  </g>
);
const Eps = () => (
  <div className={btn + " h-[28px] w-[28px] justify-center"}>
    <svg width="12" height="15" viewBox="-.5 0 11 14"><EpsMark color="#6b3f78" /></svg>
  </div>
);
const ColorBtn = ({ className }: { className: string }) => (
  <>
    <div className={btn + " h-[25px] w-[83px] justify-center"}><div className={"h-[20px] w-[74px] rounded-[3px] " + className} /></div>
    <div className={btn + " ml-px h-[25px] w-[14px] justify-center"}><Tri className="w-[9px]" /></div>
  </>
);
const GroupHead = ({ label, w, className }: { label: string; w: number; className: string }) => (
  <div className={"flex shrink-0 items-center text-[13px] font-bold " + className}>
    <svg width="12" height="8" viewBox="0 0 12 8" className="ml-px mr-[8px]"><path d="M0 .5h12L6 8z" fill="#333" /></svg>
    <Fit w={w}>{label}</Fit>
  </div>
);

function RightDock() {
  return (
    <div className="flex min-w-0 flex-1 flex-col bg-[#efefef] text-black">
      <div className="flex h-[31px] shrink-0 items-end border-b border-[#b4b4b4] pl-[7px]">
        <Tab label="Oggetti" w={41} active className="w-[72px]" />
        <Tab label="Storico dei Comandi" w={115} className="w-[144px]" />
      </div>
      <div className="h-[20px] shrink-0"><DockTitle label="Oggetti" w={51} /></div>
      <div className="ml-[7px] flex h-[164px] shrink-0 border border-r-0 border-[#b0b0b0] bg-white">
        <div className="flex min-w-0 flex-1 flex-col overflow-hidden">
          <div className="flex h-[24px] shrink-0 items-center border-b border-[#b0b0b0] bg-linear-to-b from-[#fdfdfd] to-[#ececec]">
            <div className="flex h-full w-[43px] items-center border-r border-[#d0d0d0] pl-[3px]">
              <svg width="19" height="14" viewBox="0 0 19 14" fill="none"><path d="M1 8C5 2 13 1 18 6M1 8c5 5 12 6 16 0" stroke="#888" strokeWidth="1.300" /><path d="M2 5C6 1 12 0 17 3" stroke="#bbb" /><circle cx="9.500" cy="7.500" r="4" fill="#888" /><circle cx="9.500" cy="7.500" r="2" fill="#222" /></svg>
            </div>
            <div className="flex h-full w-[43px] items-center border-r border-[#d0d0d0] pl-[4px] pt-[2px]">
              <svg width="16" height="19" viewBox="0 0 16 19" fill="none"><path d="M3.500 10V6a4.500 4.500 0 0 1 9 0v4" stroke="#888" strokeWidth="2" /><rect y="9" width="16" height="10" rx="1.500" fill="#5f5f5f" /></svg>
            </div>
            <Lab w={45} className="pl-[2px]">Oggetto</Lab>
          </div>
          <div className="-mt-px flex flex-col">
            {TREE.map(([t, w, lock, icon], i) => (
              <div key={i} className={"flex h-[22px] shrink-0 items-center pl-[3px] " + (i === 2 ? "bg-[#efefef]" : "")}>
                <Check on={i < 6} />
                <div className="w-[26px]" />
                <Check on={lock} />
                <div className="flex w-[52px] justify-end pl-[26px] pr-[7px]">{icon}</div>
                <Fit w={w} className="text-[15px] leading-[22px]">{t}</Fit>
              </div>
            ))}
          </div>
        </div>
        <div className="flex w-[18px] shrink-0 flex-col border-l border-[#b4b4b4] bg-[#e4e4e4]">
          <ScrollBtn up className="h-[17px] border-b" />
          <div className="h-[22px]" />
          <div className="h-[47px] border-y border-[#b4b4b4] bg-[#fdfdfd]" />
          <div className="flex-1" />
          <ScrollBtn className="h-[17px] border-t" />
        </div>
      </div>
      <div className="flex h-[7px] shrink-0 items-center justify-center"><div className="h-px w-[17px] bg-[repeating-linear-gradient(90deg,#aaa_0_1px,transparent_1px_3px)]" /></div>
      <div className="flex h-[30px] shrink-0 items-end border-b border-[#b4b4b4] pl-[7px]">
        <Tab label="Layout" w={38} className="w-[67px] border-l!" />
        <Tab label="Proprietà dell'oggetto" w={122} active className="w-[153px] border-l-0" />
        <Tab label="Guide" w={32} className="w-[62px]" />
        <Tab label="Atlante" w={40} className="w-[69px]" />
      </div>
      <div className="h-[21px] shrink-0"><DockTitle label="Proprietà dell'oggetto" w={147} /></div>
      <div className="flex h-[27px] shrink-0 items-center pl-[7px]">
        <div className={btn + " h-[27px] w-[28px] justify-center"}><svg width="14" height="18" viewBox="0 0 14 18"><path d="M13 .8v16.400L1 9z" fill="#6795c5" stroke="#44688f" /></svg></div>
        <Lab w={52} className="ml-[11px]">Proprietà</Lab>
      </div>
      <div className="flex h-[41px] shrink-0 items-center pl-[16px] pt-[7px]">
        <Ico s={23}><path d="M1 9l12-3 7 12-12 5z" fill="#d8607f" /><path d="M2 8l7-1 3 6-8 3z" fill="#7fb2d8" /><path d="M9 7l4-1 5 8-6 2z" fill="#c8d97d" /><path d="M10 11l6 7 3-3 1-5 3-8-8 6z" fill="#a9a48a" stroke="#888" strokeWidth=".6" /></Ico>
        <Lab w={82} className="ml-[16px] w-[82px]">Tipo di grafico</Lab>
        <Combo className="ml-[7px] h-[28px] w-[497px]">
          <svg width="18" height="20" viewBox="0 0 18 20" className="ml-[7px] mr-[4px]"><path d="M2 19C2 10 5 7 8 9s6-5 8-4" fill="none" stroke="#e88" strokeWidth="1.200" /><path d="M1 15h1.500v1.500H1zM2 9h1.500v1.500H2zM7 3h1.500v1.500H7zM11 1h1.500v1.500H11zM15 3h1.500v1.500h-1.500zM12 8h1.500v1.500h-1.500zM7 11h1.500v1.500H7z" fill="#44c" /></svg>
          <Fit w={67}>Scatter Plot</Fit>
        </Combo>
      </div>
      <div className="flex h-[578px] shrink-0 pr-[3px]">
        <div className="flex w-[10px] shrink-0 justify-center pt-[113px]"><div className="h-[17px] w-px bg-[repeating-linear-gradient(#aaa_0_1px,transparent_1px_3px)]" /></div>
        <div className="h-[576px] w-[38px] shrink-0 bg-[#5c5c5c] pl-[3px] pt-[3px]">
          <svg width="26" height="26" viewBox="0 0 26 26" fill="none" stroke="#4793a8">
            <circle cx="7.500" cy="8" r="4.300" strokeWidth="2.600" /><circle cx="7.500" cy="8" r="6.200" strokeWidth="2" strokeDasharray="2.400 2.450" />
            <circle cx="18.500" cy="13.500" r="3.200" strokeWidth="2.200" /><circle cx="18.500" cy="13.500" r="4.800" strokeWidth="1.800" strokeDasharray="1.900 1.870" />
            <circle cx="9.500" cy="20" r="2.800" strokeWidth="2" /><circle cx="9.500" cy="20" r="4.200" strokeWidth="1.600" strokeDasharray="1.700 1.600" />
          </svg>
        </div>
        <div className="flex min-w-0 flex-1 flex-col pl-[8px]">
          <div className="flex h-[522px] shrink-0 justify-between overflow-hidden">
            <div className="flex w-[560px] shrink-0 flex-col">
              <GroupHead label="Parametri del grafico" w={136} className="h-[24px] pt-[2px]" />
              <div className="flex h-[253px] shrink-0 flex-col rounded-[2px] border border-[#d5d5d5] bg-[#ececec] pl-[12px] pt-[12px]">
                <div className="flex h-[28px] items-center">
                  <Lab w={42} className="w-[126px]">Vettore</Lab>
                  <Combo className="h-[28px] w-[406px]">
                    <svg width="18" height="21" viewBox="0 0 18 21" fill="none" className="ml-[6px] mr-[4px]"><rect x=".7" y=".7" width="16.600" height="19.600" rx="1" fill="#eee" stroke="#888" strokeWidth="1.400" /><path d="M1 5h16M3 3h4M9 3h6M3 8h4M9 8h6M3 11h4M9 11h6M3 14h4M9 14h6M3 17h4M9 17h6" stroke="#888" strokeWidth="1.300" /></svg>
                    <Fit w={271}>codid19-regioni_noWKT dpc-covid19-ita-regioni</Fit>
                  </Combo>
                </div>
                <div className="flex h-[42px] items-center">
                  <Lab w={82} className="w-[129px]">Filtra elementi</Lab>
                  <svg width="26" height="20" viewBox="0 0 26 20"><path d="M6 2L0 9l6 7z" fill="#888" stroke="#666" /><rect x="5.500" y="1" width="13.500" height="17" fill="#f7e36a" stroke="#b99a17" strokeWidth="1.400" /><g transform="translate(7.500 2.500)"><EpsMark color="#5a3868" /></g><path d="M17 14h9l-4.500 5z" fill="#444" /></svg>
                </div>
                <div className="flex h-[28px] items-center">
                  <Lab w={119} className="w-[126px]">Mappa di riferimento</Lab>
                  <Combo className="h-[28px] w-[406px]"><div className="ml-[5px] mr-[4px]"><MapSheet s={20} /></div><Fit w={45}>mappa1</Fit></Combo>
                </div>
                <div className="flex h-[35px] items-center pl-[126px] pt-[2px]"><Check /><Lab w={190} className="ml-[6px]">Solo elementi visibili nella mappa</Lab></div>
                <div className="flex h-[24px] items-center pl-[126px] pt-[2px]"><Check /><Lab w={168} className="ml-[6px]">Solo elementi dentro l'atlante</Lab></div>
                <div className="mt-[6px] flex h-[28px] items-center">
                  <Lab w={52} className="w-[126px]">Campo X</Lab>
                  <Combo className="h-[28px] w-[371px] from-white to-white"><span className="ml-[4px] mr-[5px] text-[11px] font-bold text-[#666]">abc</span><Fit w={25}>data</Fit></Combo>
                  <div className="w-[7px]" /><Eps />
                </div>
                <div className="mt-[7px] flex h-[28px] items-center">
                  <Lab w={51} className="w-[126px]">Campo Y</Lab>
                  <Combo className="h-[28px] w-[371px] from-white to-white">
                    <div className="flex w-[344px] justify-end overflow-hidden italic"><Fit w={349}>{'ice_regione",  order_by:=  "data" )[to_int(@my_exp)-1]))))'}</Fit></div>
                  </Combo>
                  <div className="w-[7px]" /><Eps />
                </div>
              </div>
              <GroupHead label="Proprietà" w={61} className="h-[29px] pt-[5px]" />
              <div className="flex h-[230px] shrink-0 flex-col rounded-[2px] border border-[#d5d5d5] bg-[#ececec] pl-[12px] pt-[13px]">
                {[
                  ["Colore del simbolo", 106, "bg-[#f00]", "Dimensione del simbolo", 135, "10,00", 32],
                  ["Colore del bordo", 95, "bg-white", "Spessore del bordo", 111, "5,00", 25],
                ].map((r, i) => (
                  <div key={i} className={"flex h-[25px] shrink-0 items-center " + (i ? "mt-[10px]" : "")}>
                    <Lab w={r[1] as number} className="w-[113px]">{r[0] as string}</Lab>
                    <ColorBtn className={r[2] as string} />
                    <Override className="ml-[11px]" />
                    <Lab w={r[4] as number} className="ml-[10px] w-[142px]">{r[3] as string}</Lab>
                    <Spin text={r[5] as string} w={r[6] as number} clear={i === 1} className="h-[23px] w-[93px]" />
                    <Override className="ml-[11px]" />
                  </div>
                ))}
                <div className="mt-[8px] flex h-[24px] shrink-0 items-center"><Lab w={87} className="w-[113px]">Tipo di simbolo</Lab><Combo className="h-[24px] w-[419px]"><span className="w-[4px]" /><Fit w={28}>Punti</Fit></Combo></div>
                <div className="mt-[7px] flex h-[28px] shrink-0 items-center"><Lab w={75} className="w-[113px]">Tipo di punto</Lab><Combo className="h-[28px] w-[419px]"><div className="ml-[5px] size-[20px] rounded-full bg-black" /></Combo></div>
                <div className="mt-[7px] flex h-[28px] shrink-0 items-center"><Lab w={70} className="w-[113px]">Tipo di linea</Lab><Combo className="h-[28px] w-[419px]"><div className="ml-[5px] mr-[3px] h-px w-[20px] bg-black" /><Fit w={82}>Linea continua</Fit></Combo></div>
                <div className="mt-[8px] flex h-[23px] shrink-0 items-center">
                  <Lab w={43} className="w-[114px]">Opacità</Lab>
                  <div className="h-[7px] w-[299px] rounded-l-[2px] border border-[#2f7fd0] bg-[#57a8fb]" />
                  <div className="h-[16px] w-[15px] rounded-[3px] border border-[#aaa] bg-linear-to-b from-white to-[#f2f2f2]" />
                  <Spin text="100,0 %" w={48} dim className="ml-[4px] h-[22px] w-[100px]" />
                </div>
              </div>
            </div>
            <div className="mt-[3px] flex w-[17px] shrink-0 flex-col border-l border-[#c4c4c4] bg-[#f8f8f8]">
              <ScrollBtn up className="h-[17px] border-b" />
              <div className="flex-1" />
              <div className="h-[5px] border-t border-[#b4b4b4] bg-[#e0e0e0]" />
              <ScrollBtn className="h-[17px] border-t" />
            </div>
          </div>
          <div className="mt-[27px] flex items-center justify-end text-[12.500px]">
            <div className={btn + " h-[28px] w-[127px] pl-[5px]"}>
              <Ico s={20}><path d="M9 1v4.500a8.500 8.500 0 1 1-7.500 8.500l4-.5A4.500 4.500 0 1 0 9 9.500V14L2.500 7.500z" fill="#6aa3dc" stroke="#3c6ba0" /><path d="M9 5.500a8.500 8.500 0 0 1 12 10" stroke="#a9cdf0" strokeWidth="1.500" /></Ico>
              <Fit w={95} className="-ml-[1px]">Aggiorna grafico</Fit>
            </div>
            <div className={btn + " ml-[7px] h-[26px] w-[109px] pl-[3px]"}><Fit w={85}>Configurazione</Fit><Tri className="ml-auto mr-[4px]" /></div>
          </div>
        </div>
      </div>
    </div>
  );
}

const MENU: [string, number, boolean][] = [
  ["Layout", 44, true], ["Modifica", 59, true], ["Visualizza", 64, true], ["Oggetti", 51, true], ["Aggiungi oggetto", 119, true], ["Atlante", 48, false], ["Impostazioni", 86, false],
];

export default function App() {
  return (
    <div className={"flex h-[1080px] w-[1920px] flex-col overflow-hidden bg-[#efefef] text-black " + UI}>
      <div className="flex h-[29px] shrink-0 items-center bg-white pl-[2px]">
        <Ico s={21}><circle cx="11.500" cy="12" r="8.600" stroke="#6aa235" strokeWidth="4.800" /><path d="M11 11l12 12" stroke="#fff" strokeWidth="7" /><path d="M15 15l7.500 8" stroke="#5b9733" strokeWidth="4.500" /><path d="M10 10l4 4" stroke="#ee8a2a" strokeWidth="4" /></Ico>
        <Fit w={87} className="ml-[4px] text-[14.500px]">COVID19-ITA</Fit>
        <svg width="140" height="20" viewBox="0 0 140 20" fill="none" stroke="#111" className="ml-auto mr-[15px]">
          <path d="M0 9.500h12M58.500 7h7.500v8h-7.500zM60.500 7V4.500H68.500v8H66M117 4l11 11M128 4l-11 11" />
        </svg>
      </div>
      <div className="flex h-[25px] shrink-0 items-center gap-[15.500px] border-b border-[#d0d0d0] pl-[11px] pt-px text-[14.500px]">
        {MENU.map(([r, w, u]) => (
          <Fit key={r} w={w} className={u ? "first-letter:underline first-letter:underline-offset-2" : ""}>{r}</Fit>
        ))}
      </div>
      <div className="flex h-[39px] shrink-0 items-center border-b border-[#b0b0b0] bg-linear-to-b from-[#fafafa] to-[#efefef]">
        <Grip className="w-[14px]" />
        <Slot><Floppy /></Slot>
        <Sep />
        {TOP1.map((n, i) => <Slot key={i}>{n}</Slot>)}
        <Sep />
        <Slot><Ico><path d="M4 1.500h9l5 5v16H4z M13 1.500v5h5" fill="#fff" stroke="#888" /><Star /></Ico></Slot>
        <Sep className="w-[6px]" />
        {TOP3.map((n, i) => <Slot key={i}>{n}</Slot>)}
        <Grip className="w-[18px]" />
        <Slot><div className="flex h-[31px] w-[32px] items-center justify-center rounded-[3px] border border-[#aaa] bg-[#dadada]"><Atlas /></div></Slot>
        <Slot><Arrow bar /></Slot>
        <Slot className="w-[34px]"><Arrow /></Slot>
        <div className="flex h-[30px] w-[81px] items-center rounded-[3px] border border-[#aeaeae] bg-white text-[12.500px]">
          <Fit w={37} className="ml-[3px]">19: 19</Fit>
          <div className="ml-auto flex h-full w-[25px] items-center justify-center rounded-r-[3px] bg-[#f7f7f7] pr-[4px]"><Tri /></div>
        </div>
        <Slot><Arrow flip /></Slot>
        <Slot><Arrow flip bar /></Slot>
        <Slot><Printer /></Slot>
        <Slot><Ico><path d="M7 1v11M2 3.500l10 6M12 3.500l-10 6" stroke="#f59b1e" strokeWidth="2.200" /><path d="M12 12c4-3 4-7 3.500-10M15 6c2 4 4 5 7 4M12 12c3-3 7-3 10-2" stroke="#e5332a" strokeWidth="1.400" /><rect x="1" y="12" width="13" height="10" fill="#5ab0e8" stroke="#777" strokeWidth=".8" /><path d="M1.500 21.500v-4l4-1.500 8 3v2.500z" fill="#c9a23a" /><Exp /><path d="M17 19h7l-3.500 4z" fill="#111" /></Ico></Slot>
        <Slot><Ico><rect x="1" y="1" width="19" height="14" rx="2.500" fill="#b9d2ec" stroke="#7f9dbd" /><path d="M3 4h5l1 2-3 3-2-2zM11 4l5-1 2 2-4 3z" fill="#5b7fa8" /><path d="M14 12l8.500 10" stroke="#a58c35" strokeWidth="3.600" /><path d="M14 12l8 9.500" stroke="#f1dd92" strokeWidth="2" /><circle cx="12.500" cy="9" r="4" fill="#ddd" stroke="#777" /><path d="M12 4l1 5" stroke="#b9d2ec" strokeWidth="2.500" /></Ico></Slot>
      </div>
      <div className="flex h-[38px] shrink-0 items-center border-b border-[#b0b0b0] bg-linear-to-b from-[#fafafa] to-[#efefef]">
        <Grip className="w-[14px]" />
        {BAR2A.map((n, i) => <Slot key={i}>{n}</Slot>)}
        <Grip className="w-[19px] pl-[5px]" />
        {BAR2B.map((n, i) => <Slot key={i}>{n}</Slot>)}
      </div>
      <div className="flex h-[919px] shrink-0">
        <div className="flex w-[40px] shrink-0 flex-col items-center border-r border-[#b0b0b0] bg-linear-to-r from-[#fafafa] to-[#efefef]">
          <div className="flex h-[15px] shrink-0 items-center"><div className="mt-[3px] h-[5px] w-[18px] bg-[radial-gradient(circle,#b9b9b9_0.7px,transparent_0.8px)] bg-[length:3px_2.500px]" /></div>
          {LEFT.map((n, i) => (
            <div key={i} className="flex h-[32px] w-full shrink-0 items-center justify-center">
              <div className={"flex h-[30px] w-[32px] items-center justify-center rounded-[3px] border " + (i === 2 ? "border-[#aaa] bg-[#dadada]" : "border-transparent")}>{n}</div>
            </div>
          ))}
        </div>
        <div className="flex w-[1236px] shrink-0 flex-col">
          <div className="flex h-[25px] shrink-0"><div className="w-[24px] shrink-0" /><HRuler /></div>
          <div className="flex h-[894px] shrink-0"><VRuler /><Canvas /></div>
        </div>
        <RightDock />
      </div>
      <div className="flex h-[28px] shrink-0 items-center pt-[4px] text-[12.500px]">
        <Fit w={147} className="ml-[6px] text-[14.500px]">1 oggetto selezionato</Fit>
        <div className="ml-auto flex items-center pr-[3px]">
          <Fit w={87}>x: 311.014 mm</Fit>
          <Fit w={87} className="ml-[19px]">y: 148.475 mm</Fit>
          <Fit w={54} className="ml-[19px]">pagina: 1</Fit>
          <div className="ml-[52px] flex h-[24px] w-[203px] items-center rounded-[3px] border border-[#aeaeae] bg-white">
            <Fit w={38} className="ml-[3px]">78.3%</Fit><Tri className="ml-auto mr-[9px]" />
          </div>
          <div className="ml-[8px] flex items-center">
            <div className="h-[6px] w-[6px] rounded-l border border-[#2f7fd0] bg-[#57a8fb]" />
            <div className="h-[16px] w-[16px] rounded-[3px] border border-[#aaa] bg-white" />
            <div className="h-[6px] w-[75px] rounded-r border border-[#b4b4b4] bg-[#dcdcdc]" />
          </div>
        </div>
      </div>
      <div className="h-[2px] shrink-0 bg-[#3c3c3c]" />
    </div>
  );
}
